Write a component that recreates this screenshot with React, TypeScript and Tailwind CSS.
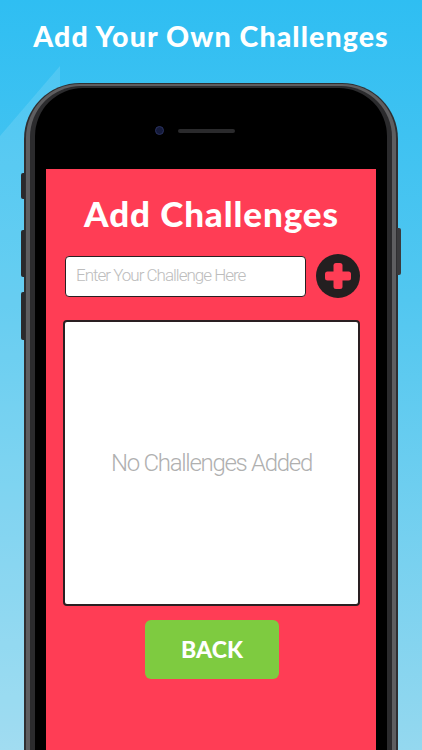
import React from "react";

export default function App() {
  return (
    <div className="relative w-[422px] h-[750px] overflow-hidden bg-[linear-gradient(180deg,#2fbef2_0%,#52c7f0_40%,#94d8ef_100%)]">
      <svg className="absolute left-0 top-0" width="422" height="750" viewBox="0 0 422 750">
        <polygon points="0,136 60,66 60,750 0,750" fill="#ffffff" fillOpacity="0.12" />
      </svg>
      <div className="relative flex flex-col h-full">
        <div className="h-[83px] flex items-center justify-center pb-[11px]">
          <h1 className="text-white text-[28.5px] leading-none font-black tracking-[1.1px] font-['Lato',sans-serif]">
            Add Your Own Challenges
          </h1>
        </div>
        <div className="relative ml-[24px] w-[374px] flex-1">
          <div className="absolute left-[-3px] top-[90px] w-[4px] h-[26px] rounded-l-[2px] bg-[#2a2a2c]" />
          <div className="absolute left-[-3px] top-[147px] w-[4px] h-[47px] rounded-l-[2px] bg-[#2a2a2c]" />
          <div className="absolute left-[-3px] top-[209px] w-[4px] h-[48px] rounded-l-[2px] bg-[#2a2a2c]" />
          <div className="absolute right-[-3px] top-[145px] w-[4px] h-[47px] rounded-r-[2px] bg-[#3a3a3c]" />
          <div className="h-full rounded-t-[56px] bg-[#2f2f31] px-[2px] pt-[1px]">
            <div className="h-full rounded-t-[54px] bg-[#5e5e60] px-[4px] pt-[2px]">
              <div className="h-full rounded-t-[51px] bg-[#2b2b2d] px-[5px] pt-[2px]">
                <div className="h-full rounded-t-[48px] bg-black px-[11px] flex flex-col">
                  <div className="h-[81px] flex items-center justify-center shrink-0 pt-[4px]">
                    <div className="w-[9px] h-[9px] rounded-full bg-[#141a3a] border border-[#2a3260] mr-[14px] ml-[-32px]" />
                    <div className="w-[57px] h-[4px] rounded-full bg-[#2a2a2c]" />
                  </div>
                  <div className="flex-1 bg-[#ff3d55] pl-[17px] pr-[16px] flex flex-col">
                    <h2 className="text-white text-[35px] leading-none font-black text-center tracking-[0.9px] mt-[27px] font-['Lato',sans-serif]">
                      Add Challenges
                    </h2>
                    <div className="flex items-center mt-[23px] pl-[2px]">
                      <div className="w-[241px] h-[41px] bg-white rounded-[4px] border-[1.5px] border-[#2a1f22] flex items-center pl-[10px]">
                        <span className="text-[#bdbdbd] text-[17px] font-light tracking-[-1px] font-['Roboto',sans-serif]">
                          Enter Your Challenge Here
                        </span>
                      </div>
                      <div className="ml-auto w-[44px] h-[44px] rounded-full bg-[#231f20] flex items-center justify-center">
                        <svg width="30" height="30" viewBox="0 0 30 30">
                          <rect x="10.5" y="2" width="9" height="26" rx="2.5" fill="#ff3d55" />
                          <rect x="2" y="10.5" width="26" height="9" rx="2.5" fill="#ff3d55" />
                        </svg>
                      </div>
                    </div>
                    <div className="mt-[22px] h-[286px] bg-white rounded-[4px] border-2 border-[#2a1f22] flex items-center justify-center">
                      <span className="text-[#b0b0b0] text-[24px] font-light tracking-[-1.3px] font-['Roboto',sans-serif]">
                        No Challenges Added
                      </span>
                    </div>
                    <div className="flex justify-center mt-[14px] pl-[1px]">
                      <div className="w-[134px] h-[59px] rounded-[6px] bg-[#7ecb40] flex items-center justify-center">
                        <span className="text-white text-[23px] font-black font-['Lato',sans-serif]">BACK</span>
                      </div>
                    </div>
                  </div>
                </div>
              </div>
            </div>
          </div>
        </div>
      </div>
    </div>
  );
}
